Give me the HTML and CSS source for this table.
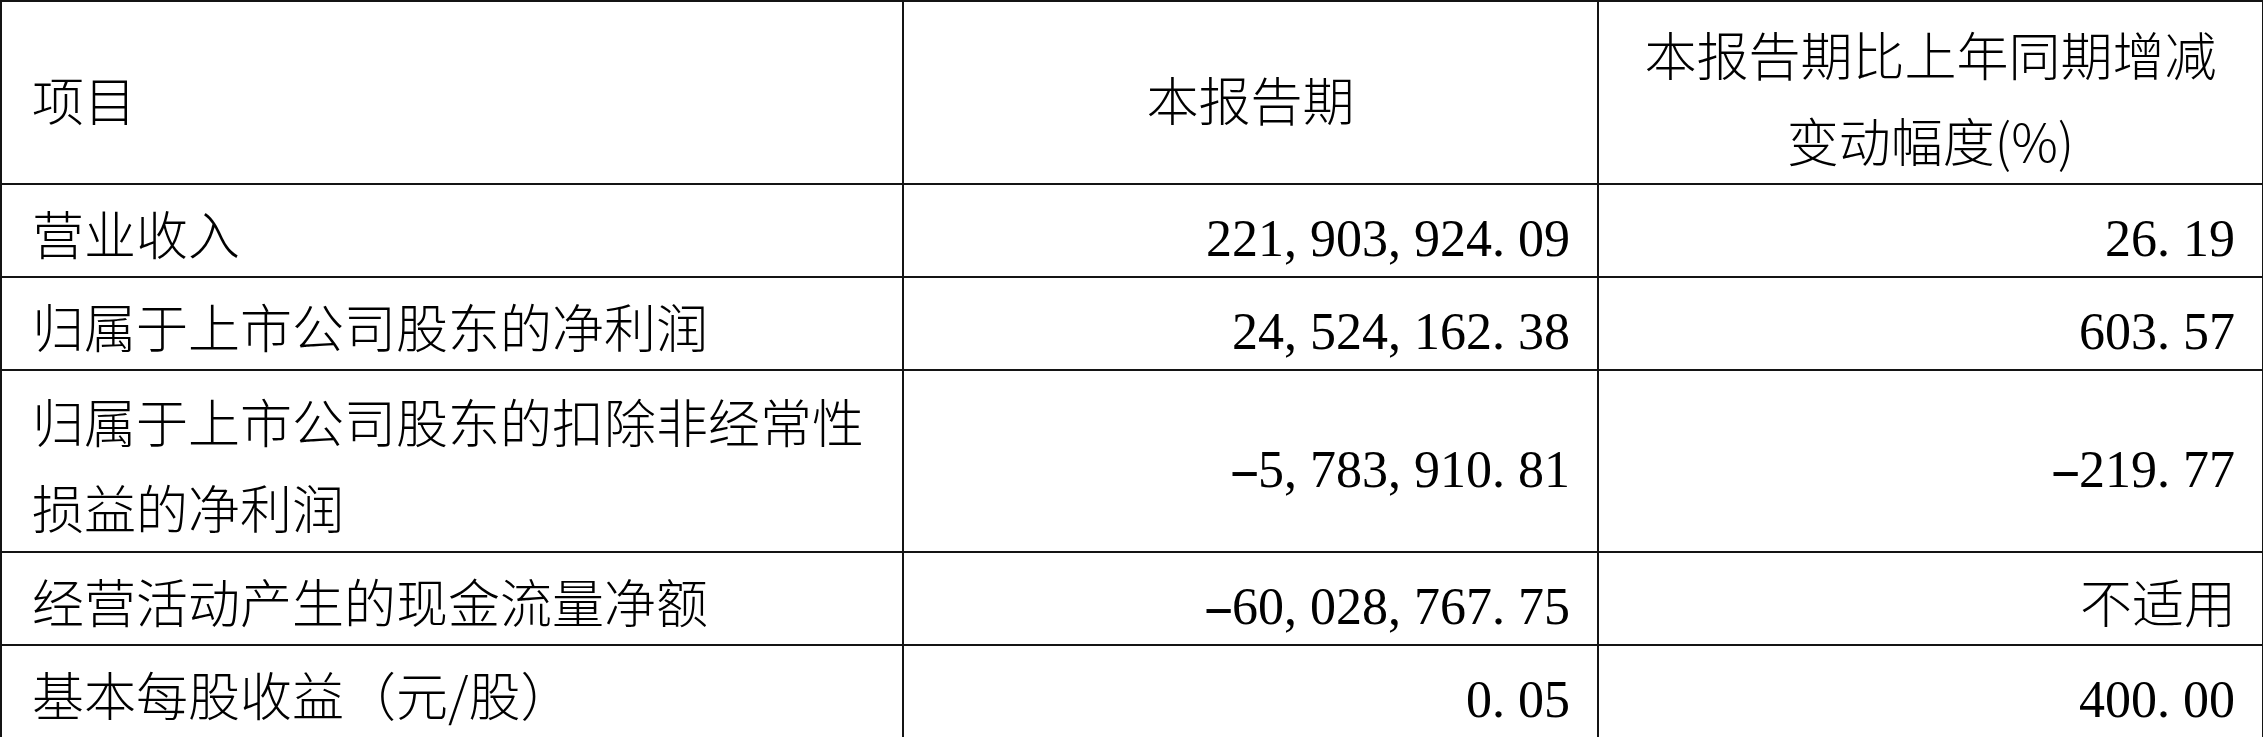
FILE: index.html
```html
<!DOCTYPE html>
<html lang="zh-CN">
<head>
<meta charset="utf-8">
<title>主要会计数据</title>
<link rel="stylesheet" href="styles.css">
</head>
<body>
<table class="fin">
  <colgroup>
    <col class="c1">
    <col class="c2">
    <col class="c3">
  </colgroup>
  <tr class="row-head">
    <td class="cn head-mid">项目</td>
    <td class="cn head-mid center">本报告期</td>
    <td class="cn head-two center">本报告期比上年同期增减<br>变动幅度(%)</td>
  </tr>
  <tr class="row-one">
    <td class="cn">营业收入</td>
    <td class="num">221<span class="pu">,</span>903<span class="pu">,</span>924<span class="pu">.</span>09</td>
    <td class="num">26<span class="pu">.</span>19</td>
  </tr>
  <tr class="row-one">
    <td class="cn">归属于上市公司股东的净利润</td>
    <td class="num">24<span class="pu">,</span>524<span class="pu">,</span>162<span class="pu">.</span>38</td>
    <td class="num">603<span class="pu">.</span>57</td>
  </tr>
  <tr class="row-two">
    <td class="cn">归属于上市公司股东的扣除非经常性<br>损益的净利润</td>
    <td class="num"><span class="mi">-</span>5<span class="pu">,</span>783<span class="pu">,</span>910<span class="pu">.</span>81</td>
    <td class="num"><span class="mi">-</span>219<span class="pu">.</span>77</td>
  </tr>
  <tr class="row-one">
    <td class="cn">经营活动产生的现金流量净额</td>
    <td class="num"><span class="mi">-</span>60<span class="pu">,</span>028<span class="pu">,</span>767<span class="pu">.</span>75</td>
    <td class="cn right">不适用</td>
  </tr>
  <tr class="row-one">
    <td class="cn">基本每股收益（元/股）</td>
    <td class="num">0<span class="pu">.</span>05</td>
    <td class="num">400<span class="pu">.</span>00</td>
  </tr>
</table>
</body>
</html>
```
FILE: styles.css
```css
html, body {
  margin: 0;
  padding: 0;
  background: #ffffff;
}

.fin {
  border-collapse: collapse;
  table-layout: fixed;
  width: 2262px;
  color: #000;
}

.c1 { width: 902px; }
.c2 { width: 695px; }
.c3 { width: 665px; }

.fin td {
  border: 2px solid #141414;
  vertical-align: middle;
  white-space: nowrap;
  overflow: hidden;
}

.row-head { height: 183px; }
.row-one { height: 93px; }
.row-two { height: 182px; }

.cn {
  font-family: "Noto Sans CJK SC", "Noto Sans", sans-serif;
  font-weight: 300;
  font-size: 52px;
  line-height: 86px;
  padding: 5px 28px 0 30px;
  text-align: left;
}

.cn.right { text-align: right; padding-right: 26px; }
.cn.center { text-align: center; padding-left: 0; padding-right: 0; }

.head-mid { padding-top: 12px; }
.head-two { padding-top: 9px; }

.num {
  font-family: "Liberation Serif", "Times New Roman", serif;
  font-size: 52px;
  line-height: 75px;
  padding: 16px 27px 0 20px;
  text-align: right;
}

.pu {
  display: inline-block;
  width: 0.5em;
  text-align: left;
}

.mi {
  display: inline-block;
  width: 0.56em;
  text-align: left;
  transform: scaleX(1.8);
  transform-origin: left center;
}
```
